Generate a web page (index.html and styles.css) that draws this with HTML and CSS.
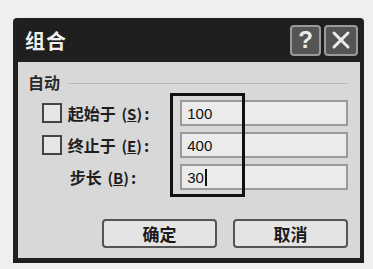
FILE: index.html
```html
<!DOCTYPE html>
<html lang="zh-CN">
<head>
    <meta charset="UTF-8">
    <title>组合</title>
    <link rel="stylesheet" href="styles.css">
</head>
<body>

    <div class="dialog">
        <!-- Title bar -->
        <div class="titlebar">
            <span class="title">组合</span>
            <div class="caption-btns">
                <div class="cap-btn help">?</div>
                <div class="cap-btn close">
                    <svg width="22" height="22" viewBox="0 0 22 22">
                        <path d="M4 4 L18 18 M18 4 L4 18" stroke="#ececec" stroke-width="3" stroke-linecap="round"/>
                    </svg>
                </div>
            </div>
        </div>

        <!-- Body -->
        <div class="body">
            <div class="group-label">自动</div>

            <div class="rows">
                <div class="row">
                    <span class="check"></span>
                    <label class="lbl">起始于 <span class="key">(<u>S</u>)</span>:</label>
                    <div class="field">100</div>
                </div>
                <div class="row">
                    <span class="check"></span>
                    <label class="lbl">终止于 <span class="key">(<u>E</u>)</span>:</label>
                    <div class="field">400</div>
                </div>
                <div class="row">
                    <span class="check-space"></span>
                    <label class="lbl step">步长 <span class="key">(<u>B</u>)</span>:</label>
                    <div class="field">30<span class="caret"></span></div>
                </div>
            </div>

            <div class="buttons">
                <div class="btn">确定</div>
                <div class="btn">取消</div>
            </div>

            <!-- marker drawn over the value column -->
            <div class="marker"></div>
        </div>
    </div>

</body>
</html>
```

FILE: styles.css
```css
body {
    margin: 0;
    background-color: #efefef;
    font-family: "Noto Sans CJK SC", "Liberation Sans", sans-serif;
}

.dialog {
    margin: 18px 0 0 13px;
    width: 351px;
    box-sizing: border-box;
    background-color: #1f1f1f;
    padding: 0 4px 5px 5px;
    border-radius: 4px 4px 0 0;
}

.titlebar {
    height: 44px;
    display: flex;
    align-items: center;
    justify-content: space-between;
    padding-left: 7px;
}

.title {
    color: #f0f0f0;
    font-size: 20px;
    font-weight: bold;
    letter-spacing: 1px;
}

.caption-btns {
    display: flex;
    gap: 3px;
    margin-right: 2px;
}

.cap-btn {
    width: 31px;
    height: 31px;
    box-sizing: border-box;
    border: 2px solid #9a9a9a;
    border-radius: 4px;
    background-color: #555;
    display: flex;
    align-items: center;
    justify-content: center;
}

.help {
    color: #ececec;
    font-family: "Liberation Sans", sans-serif;
    font-size: 24px;
    font-weight: bold;
}

.close {
    width: 34px;
}

.body {
    position: relative;
    height: 196px;
    background-color: #d8d8d8;
    padding: 10px 12px 0 10px;
    box-sizing: border-box;
}

.group-label {
    display: flex;
    align-items: center;
    font-size: 16px;
    font-weight: bold;
    color: #2a2a2a;
    line-height: 20px;
}

.group-label::after {
    content: "";
    flex: 1;
    height: 1px;
    background-color: #b8b8b8;
    margin-left: 8px;
    margin-top: 3px;
}

.rows {
    margin-top: 8px;
    display: flex;
    flex-direction: column;
    gap: 6px;
    padding-left: 14px;
}

.row {
    display: flex;
    align-items: center;
    height: 26px;
}

.check, .check-space {
    width: 20px;
    height: 20px;
    box-sizing: border-box;
    margin-right: 6px;
}

.check {
    border: 2px solid #444;
    background-color: #e6e6e6;
}

.lbl {
    width: 114px;
    font-size: 16px;
    font-weight: bold;
    color: #1e1e1e;
    white-space: nowrap;
}

.lbl .key {
    font-size: 15px;
    margin-left: 2px;
    margin-right: 2px;
}

.lbl.step {
    padding-left: 2px;
    box-sizing: border-box;
}

.field {
    width: 170px;
    height: 26px;
    box-sizing: border-box;
    border: 2px solid #9a9a9a;
    background-color: #ebebeb;
    font-family: "Liberation Sans", sans-serif;
    font-size: 15px;
    color: #111;
    padding-left: 5px;
    display: flex;
    align-items: center;
}

.caret {
    display: inline-block;
    width: 2px;
    height: 17px;
    background-color: #111;
    margin-left: 1px;
}

.buttons {
    position: absolute;
    right: 12px;
    bottom: 10px;
    display: flex;
    gap: 16px;
}

.btn {
    width: 115px;
    height: 29px;
    box-sizing: border-box;
    border: 2px solid #555;
    border-radius: 4px;
    background-color: #e4e4e4;
    display: flex;
    align-items: center;
    justify-content: center;
    font-size: 17px;
    font-weight: bold;
    color: #1a1a1a;
}

.marker {
    position: absolute;
    left: 152px;
    top: 31px;
    width: 75px;
    height: 104px;
    box-sizing: border-box;
    border: 3px solid #111;
}
```
